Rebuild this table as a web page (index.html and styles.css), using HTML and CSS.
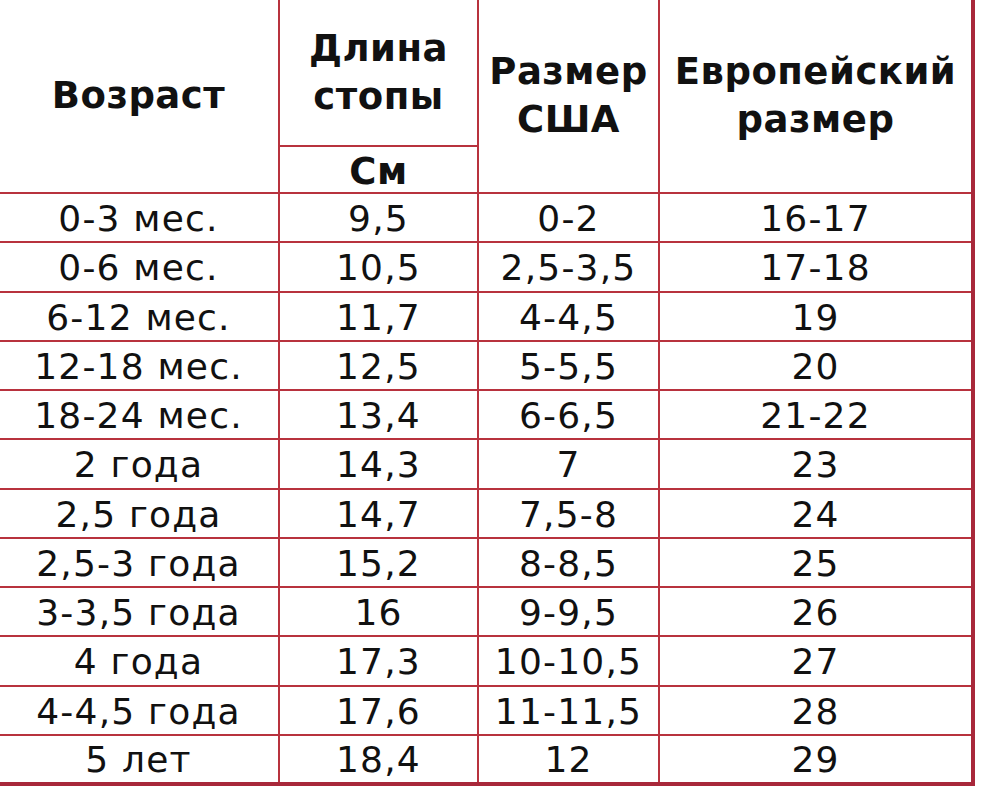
FILE: index.html
```html
<!DOCTYPE html>
<html lang="ru">
<head>
<meta charset="utf-8">
<title>Размеры обуви</title>
<link rel="stylesheet" href="styles.css">
</head>
<body>
<table class="sizes">
  <colgroup>
    <col class="c-age">
    <col class="c-len">
    <col class="c-us">
    <col class="c-eu">
  </colgroup>
  <thead>
    <tr class="h1">
      <th rowspan="2" class="first">Возраст</th>
      <th class="two">Длина<br>стопы</th>
      <th rowspan="2" class="two">Размер<br>США</th>
      <th rowspan="2" class="two last">Европейский<br>размер</th>
    </tr>
    <tr class="h2">
      <th class="unit">См</th>
    </tr>
  </thead>
  <tbody>
    <tr><td class="first">0-3 мес.</td><td>9,5</td><td>0-2</td><td class="last">16-17</td></tr>
    <tr><td class="first">0-6 мес.</td><td>10,5</td><td>2,5-3,5</td><td class="last">17-18</td></tr>
    <tr><td class="first">6-12 мес.</td><td>11,7</td><td>4-4,5</td><td class="last">19</td></tr>
    <tr><td class="first">12-18 мес.</td><td>12,5</td><td>5-5,5</td><td class="last">20</td></tr>
    <tr><td class="first">18-24 мес.</td><td>13,4</td><td>6-6,5</td><td class="last">21-22</td></tr>
    <tr><td class="first">2 года</td><td>14,3</td><td>7</td><td class="last">23</td></tr>
    <tr><td class="first">2,5 года</td><td>14,7</td><td>7,5-8</td><td class="last">24</td></tr>
    <tr><td class="first">2,5-3 года</td><td>15,2</td><td>8-8,5</td><td class="last">25</td></tr>
    <tr><td class="first">3-3,5 года</td><td>16</td><td>9-9,5</td><td class="last">26</td></tr>
    <tr><td class="first">4 года</td><td>17,3</td><td>10-10,5</td><td class="last">27</td></tr>
    <tr><td class="first">4-4,5 года</td><td>17,6</td><td>11-11,5</td><td class="last">28</td></tr>
    <tr class="end"><td class="first">5 лет</td><td>18,4</td><td>12</td><td class="last">29</td></tr>
  </tbody>
</table>
</body>
</html>
```

FILE: styles.css
```css
html, body {
  margin: 0;
  padding: 0;
  background: #ffffff;
}

body {
  font-family: "DejaVu Sans", Verdana, sans-serif;
  color: #111111;
}

.sizes {
  border-collapse: collapse;
  table-layout: fixed;
  width: 974px;
  margin-left: -1px;
}

.c-age { width: 280px; }
.c-len { width: 199px; }
.c-us  { width: 181px; }
.c-eu  { width: 314px; }

.sizes th,
.sizes td {
  border: 2px solid #b8323e;
  padding: 0;
  text-align: center;
  vertical-align: middle;
  white-space: nowrap;
}

.sizes th {
  font-weight: bold;
  font-size: 37px;
  letter-spacing: 0.5px;
  line-height: 48px;
  border-top: none;
}

.sizes th.first,
.sizes td.first {
  border-left: none;
}

.sizes th.last,
.sizes td.last {
  border-right: 4px solid #a8283a;
}

.sizes tr.h1 { height: 146px; }
.sizes tr.h2 { height: 47px; }

.sizes th.unit {
  border-top: 2px solid #b8323e;
  line-height: 40px;
  padding-top: 4px;
}

.sizes tbody tr { height: 49.25px; }

.sizes td {
  font-size: 36px;
  letter-spacing: 1.2px;
  line-height: 40px;
  padding-top: 3px;
}

.sizes tr.end td {
  border-bottom: 4px solid #a8283a;
}
```
